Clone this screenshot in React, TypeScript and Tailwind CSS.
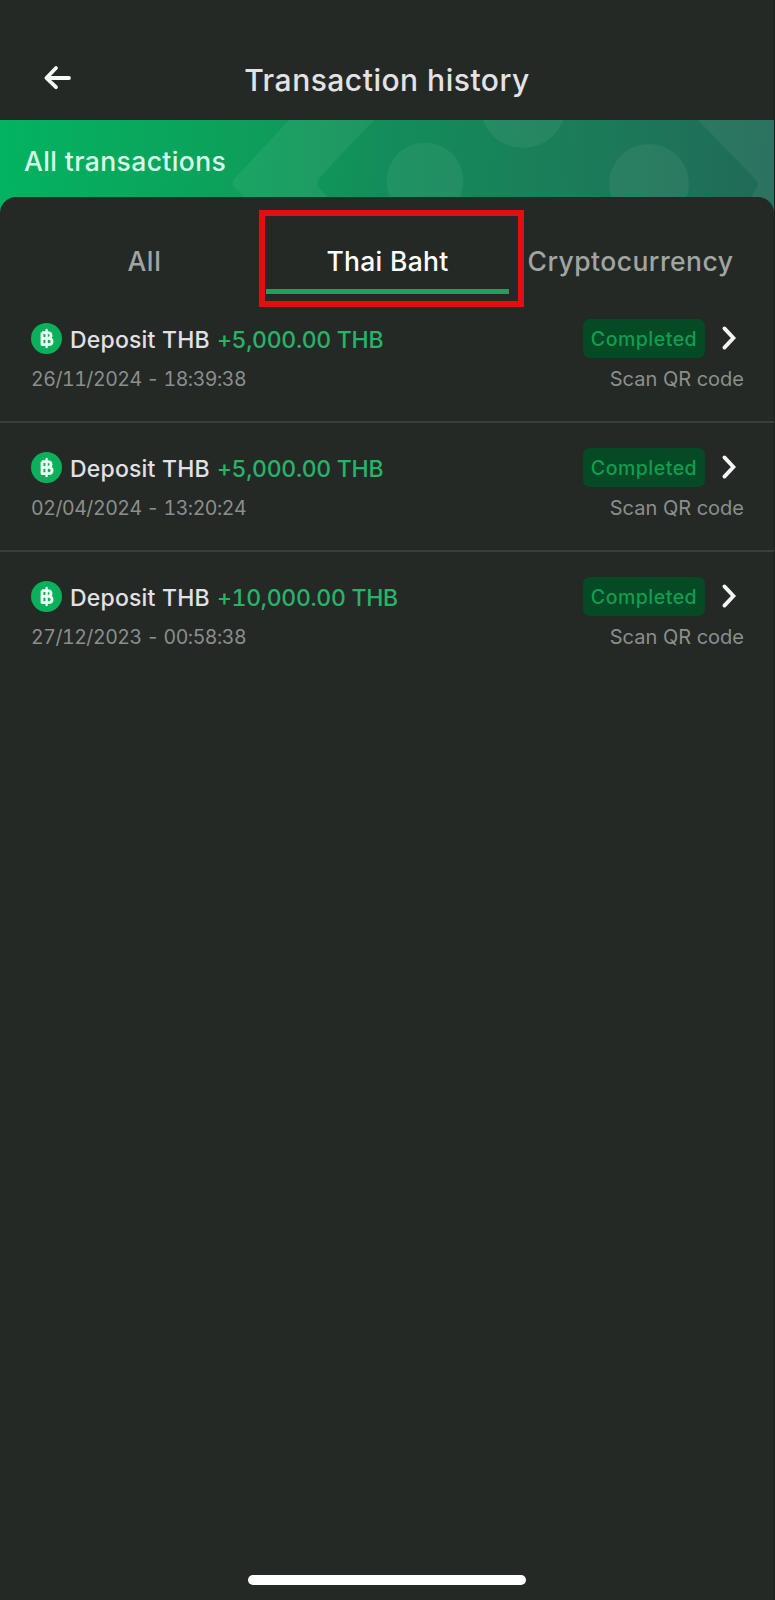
const transactions = [
  { amount: "+5,000.00 THB", date: "26/11/2024 - 18:39:38" },
  { amount: "+5,000.00 THB", date: "02/04/2024 - 13:20:24" },
  { amount: "+10,000.00 THB", date: "27/12/2023 - 00:58:38" },
];

function BackArrow() {
  return (
    <svg width="30" height="28" viewBox="0 0 30 28" fill="none" stroke="#f4fbf7" strokeWidth="3.8" strokeLinecap="round" strokeLinejoin="round">
      <path d="M26 14H4M13 4L3.4 14L13 23.2" />
    </svg>
  );
}

function Chevron() {
  return (
    <svg width="17" height="28" viewBox="0 0 17 28" fill="none" stroke="#f5f5f5" strokeWidth="3.8" strokeLinecap="round" strokeLinejoin="miter">
      <path d="M3.4 4.4L12.4 14L3.4 23.6" />
    </svg>
  );
}

function BahtIcon() {
  return (
    <svg width="31" height="31" viewBox="0 0 31 31" fill="none">
      <circle cx="15.5" cy="15.5" r="15.5" fill="#0cb05b" />
      <path d="M11 9.6H16.6C21.2 9.6 21.2 15.3 16.6 15.3H11M11 15.3H17.2C22.4 15.3 22.4 21.6 17.2 21.6H11ZM11 9.6V21.6" stroke="#f0fff6" strokeWidth="2.8" strokeLinejoin="round" />
      <path d="M15.6 7V24" stroke="#f0fff6" strokeWidth="2.4" strokeLinecap="round" />
    </svg>
  );
}

function BannerArt() {
  return (
    <svg className="absolute inset-0" width="775" height="97" viewBox="0 0 775 97">
      <defs>
        <linearGradient id="banner" gradientUnits="userSpaceOnUse" x1="0" y1="70" x2="765" y2="110">
          <stop offset="0" stopColor="#03b360" />
          <stop offset="0.3" stopColor="#0da05b" />
          <stop offset="0.5" stopColor="#138d5a" />
          <stop offset="0.75" stopColor="#1b7c59" />
          <stop offset="1" stopColor="#206a58" />
        </linearGradient>
      </defs>
      <rect width="775" height="97" fill="url(#banner)" />
      <g fill="#ffffff" fillOpacity="0.06">
        <path d="M289 0H374L320 57Q315 63 319 68L329 78V97H265L235 68Q230 63 235 58Z" />
        <circle cx="425" cy="61" r="38.5" />
        <circle cx="523" cy="-15" r="43" />
        <circle cx="649" cy="64" r="40" />
        <path d="M698 0H775V97H740L756 69Q760 64 755 59Z" />
      </g>
    </svg>
  );
}

export default function App() {
  return (
    <div className="flex h-[1600px] w-[775px] flex-col overflow-hidden border-r border-[#1b1f1d] bg-[#252926] font-['Inter',sans-serif]">
      <header className="grid h-[120px] grid-cols-[1fr_auto_1fr] items-center pt-[40px]">
        <button className="-mt-[5px] ml-[43px] w-fit" aria-label="Back">
          <BackArrow />
        </button>
        <h1 className="text-[30px] leading-10 font-medium tracking-[0.5px] whitespace-nowrap text-[#e4e2e5]">Transaction history</h1>
      </header>

      <section className="relative h-[77px] shrink-0 pt-[21px] pl-6">
        <BannerArt />
        <h2 className="relative text-[26.5px] leading-10 font-[550] tracking-[0.4px] whitespace-nowrap text-[#d9fbe8]">
          <span>All transactions</span>
        </h2>
      </section>

      <main className="relative flex-1 rounded-t-[16px] bg-[#252926]">
        <nav className="ml-[23px] grid h-[97px] grid-cols-[243px_243px_243px] text-[26.5px] leading-10 font-[550] tracking-[0.45px] whitespace-nowrap text-[#a0a5a2]">
          <button className="flex justify-center pt-[44px] tracking-[0.7px]"><span>All</span></button>
          <button className="relative flex justify-center border-b-[5px] border-[#20a05c] pt-[44px] tracking-[0.3px] text-white">
            <span>Thai Baht</span>
            <span className="absolute top-[13px] -left-[7px] h-[97px] w-[265px] border-[6px] border-[#e20f0f]" />
          </button>
          <button className="flex justify-center pt-[44px]"><span>Cryptocurrency</span></button>
        </nav>

        <ul>
          {transactions.map((item, i) => (
            <li key={item.date} className={i < 2 ? "h-[129px] border-b-2 border-[#3a3e3c] pt-6 pr-[30px] pl-[31px]" : "h-[129px] pt-6 pr-[30px] pl-[31px]"}>
              <div className="flex h-10 items-center whitespace-nowrap">
                <BahtIcon />
                <span className="mt-1 ml-2 w-[147px] text-[23px] font-[550] tracking-[0.2px] text-[#e2e0e3]">Deposit THB</span>
                <span className="mt-1 text-[23px] font-[550] tracking-[-0.3px] text-[#27b468] tabular-nums">{item.amount}</span>
                <span className="ml-auto flex h-[39px] w-[122px] items-center justify-center rounded-[7px] bg-[#044a24] pt-[3px] text-[19.5px] font-[550] tracking-[0.5px] text-[#149c51]">Completed</span>
                <span className="mr-[6px] ml-[16px]"><Chevron /></span>
              </div>
              <div className="mt-[7px] flex justify-between text-[20px] leading-7 whitespace-nowrap text-[#8b8f8d]">
                <time className="text-[19.5px] tracking-[-0.45px] tabular-nums">{item.date}</time>
                <span>Scan QR code</span>
              </div>
            </li>
          ))}
        </ul>
      </main>

      <div className="mx-auto mb-[15px] h-[10px] w-[278px] shrink-0 rounded-full bg-white" />
    </div>
  );
}
